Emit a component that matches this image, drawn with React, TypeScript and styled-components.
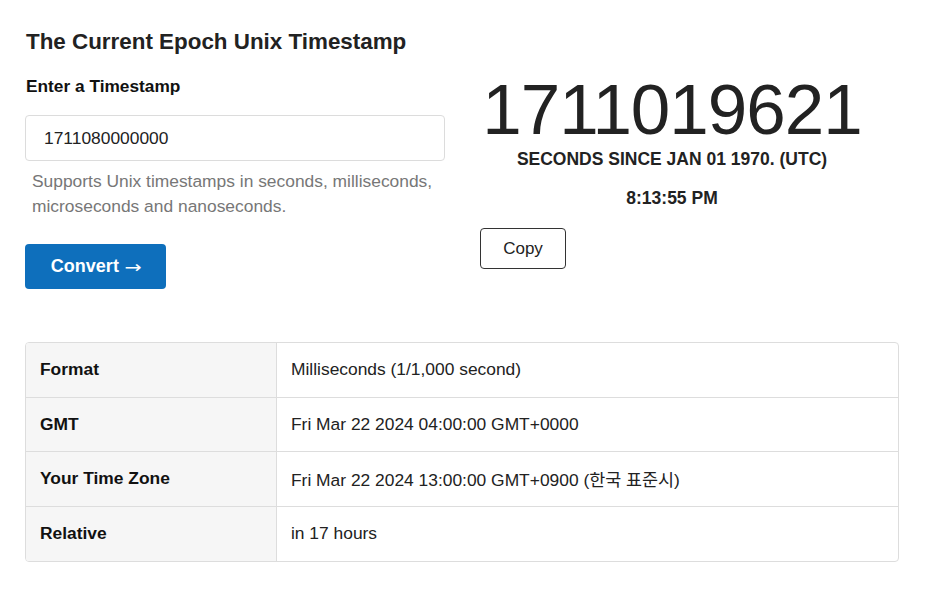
import React from "react";
import styled, { createGlobalStyle } from "styled-components";

const Global = createGlobalStyle`
  html, body { margin: 0; padding: 0; background: #fff; }
  body { font-family: "Liberation Sans", Arial, sans-serif; color: #222; }
  * { box-sizing: border-box; }
`;

const Page = styled.div`
  padding: 28px 28px 0 25px;
  width: 927px;
`;

const Top = styled.div`
  display: grid;
  grid-template-columns: 420px 384px;
  column-gap: 35px;
`;

const LeftCol = styled.div`
  display: flex;
  flex-direction: column;
`;

const Title = styled.h1`
  margin: 0 0 0 1px;
  font-size: 22.4px;
  line-height: 28px;
  font-weight: 700;
  color: #222;
`;

const Label = styled.label`
  margin: 20px 0 0 1px;
  font-size: 17.3px;
  line-height: 20px;
  font-weight: 700;
  color: #111;
`;

const Input = styled.input`
  margin-top: 19px;
  width: 420px;
  height: 46px;
  border: 1px solid #dcdcdc;
  border-radius: 4px;
  padding: 0 18px;
  font-family: "Liberation Sans", Arial, sans-serif;
  font-size: 17.4px;
  color: #222;
  outline: none;
`;

const Help = styled.p`
  margin: 8px 0 0 7px;
  font-size: 17.4px;
  line-height: 25px;
  color: #777;
`;

const ConvertButton = styled.button`
  margin-top: 25px;
  width: 141px;
  height: 45px;
  border: none;
  border-radius: 4px;
  background: #0e6fbc;
  color: #fff;
  font-family: "Liberation Sans", Arial, sans-serif;
  font-size: 18px;
  font-weight: 700;
  display: flex;
  align-items: center;
  justify-content: center;
  gap: 5px;
  padding: 0;
`;

const Arrow = styled.span`
  font-family: "DejaVu Sans", sans-serif;
  font-weight: 400;
  font-size: 17px;
  transform: scaleX(1.2);
  margin-left: 2px;
`;

const RightCol = styled.div`
  display: flex;
  flex-direction: column;
  align-items: center;
  padding-top: 45px;
`;

const BigNumber = styled.div`
  font-size: 71px;
  line-height: 74px;
  color: #222;
  letter-spacing: -1px;
`;

const Caption = styled.div`
  margin-top: 2px;
  font-size: 17.5px;
  font-weight: 700;
  line-height: 20px;
  color: #222;
`;

const Time = styled.div`
  margin-top: 19px;
  font-size: 17.5px;
  font-weight: 700;
  line-height: 20px;
  color: #222;
`;

const CopyButton = styled.button`
  align-self: flex-start;
  margin-top: 20px;
  width: 86px;
  height: 41px;
  border: 1px solid #333;
  border-radius: 4px;
  background: #fff;
  font-family: "Liberation Sans", Arial, sans-serif;
  font-size: 17px;
  color: #222;
`;

const Table = styled.div`
  margin-top: 53px;
  width: 874px;
  border: 1px solid #dddddd;
  border-radius: 4px;
  overflow: hidden;
  display: grid;
  grid-template-columns: 251px 1fr;
`;

const HeadCell = styled.div<{ $last?: boolean }>`
  background: #f6f6f6;
  height: 54.5px;
  display: flex;
  align-items: center;
  padding-left: 14px;
  border-right: 1px solid #dddddd;
  border-bottom: ${(p) => (p.$last ? "none" : "1px solid #dddddd")};
  font-size: 17.4px;
  font-weight: 700;
  color: #111;
`;

const ValueCell = styled.div<{ $last?: boolean }>`
  height: 54.5px;
  display: flex;
  align-items: center;
  padding-left: 14px;
  border-bottom: ${(p) => (p.$last ? "none" : "1px solid #dddddd")};
  font-size: 17.4px;
  color: #222;
  font-family: "Liberation Sans", Arial, "Noto Sans CJK KR", sans-serif;
`;

const rows: [string, string][] = [
  ["Format", "Milliseconds (1/1,000 second)"],
  ["GMT", "Fri Mar 22 2024 04:00:00 GMT+0000"],
  ["Your Time Zone", "Fri Mar 22 2024 13:00:00 GMT+0900 (한국 표준시)"],
  ["Relative", "in 17 hours"],
];

export default function App() {
  return (
    <Page>
      <Global />
      <Top>
        <LeftCol>
          <Title>The Current Epoch Unix Timestamp</Title>
          <Label>Enter a Timestamp</Label>
          <Input defaultValue="1711080000000" />
          <Help>
            Supports Unix timestamps in seconds, milliseconds, microseconds and nanoseconds.
          </Help>
          <ConvertButton>
            Convert<Arrow>→</Arrow>
          </ConvertButton>
        </LeftCol>
        <RightCol>
          <BigNumber>1711019621</BigNumber>
          <Caption>SECONDS SINCE JAN 01 1970. (UTC)</Caption>
          <Time>8:13:55 PM</Time>
          <CopyButton>Copy</CopyButton>
        </RightCol>
      </Top>
      <Table>
        {rows.map(([k, v], i) => (
          <React.Fragment key={k}>
            <HeadCell $last={i === rows.length - 1}>{k}</HeadCell>
            <ValueCell $last={i === rows.length - 1}>{v}</ValueCell>
          </React.Fragment>
        ))}
      </Table>
    </Page>
  );
}
